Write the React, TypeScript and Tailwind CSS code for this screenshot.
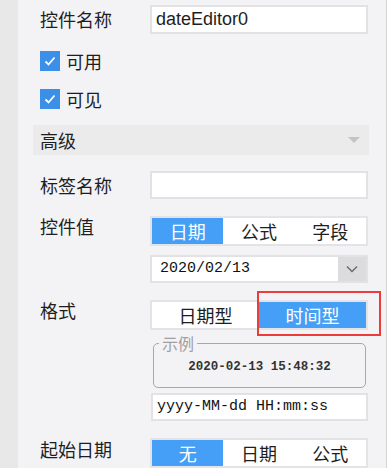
const cjk = { fontFamily: '"Noto Sans CJK SC", "Liberation Sans", sans-serif' }
const latin = { fontFamily: '"Liberation Sans", "Noto Sans CJK SC", sans-serif' }
const mono = { fontFamily: '"Liberation Mono", "DejaVu Sans Mono", monospace' }

function Check() {
  return (
    <span className="w-[20px] h-[20px] bg-[#3b8fe6] flex items-center justify-center">
      <svg width="14" height="14" viewBox="0 0 14 14">
        <path d="M2.5 7.5 L5.5 10.5 L11.5 3.5" fill="none" stroke="#fff" strokeWidth="1.8" />
      </svg>
    </span>
  )
}

function Segment({ items, active }: { items: string[]; active: number }) {
  return (
    <div className="w-[218px] h-[30px] border-2 border-[#e4e4e6] flex bg-white">
      {items.map((it, i) => (
        <div
          key={it}
          className={
            "flex-1 flex items-center justify-center text-[18px] " +
            (i === active ? "bg-[#459ff6] text-white" : "text-[#1e1e1e]")
          }
        >
          {it}
        </div>
      ))}
    </div>
  )
}

export default function App() {
  return (
    <div className="w-[387px] h-[468px] flex bg-[#f3f3f6] overflow-hidden border-r border-[#d4d4d6] text-[#1e1e1e]" style={cjk}>
      <div className="w-[18px] shrink-0 bg-[#e8e8e9]" />
      <div className="flex-1 pl-[22px] pt-[5px]">
        <div className="flex items-center h-[29px]">
          <div className="w-[110px] text-[18px]">控件名称</div>
          <div className="w-[218px] h-[29px] border-2 border-[#e2e2e4] bg-white flex items-center pl-[4px] text-[18px]" style={latin}>
            dateEditor0
          </div>
        </div>

        <div className="flex items-center gap-[6px] mt-[17px] h-[20px] text-[18px]">
          <Check />
          <span>可用</span>
        </div>
        <div className="flex items-center gap-[6px] mt-[18px] h-[20px] text-[18px]">
          <Check />
          <span>可见</span>
        </div>

        <div className="-ml-[7px] w-[336px] h-[30px] mt-[16px] bg-[#ebebec] flex items-center justify-between pl-[7px] pr-[9px]">
          <span className="text-[18px]">高级</span>
          <svg width="12" height="6" viewBox="0 0 12 6">
            <path d="M0 0 H12 L6 6 Z" fill="#c4c4c6" />
          </svg>
        </div>

        <div className="flex items-center h-[28px] mt-[16px]">
          <div className="w-[110px] text-[18px]">标签名称</div>
          <div className="w-[218px] h-[28px] border-2 border-[#e2e2e4] bg-white" />
        </div>

        <div className="flex items-start mt-[17px]">
          <div className="w-[110px] text-[18px] leading-[20px]">控件值</div>
          <Segment items={["日期", "公式", "字段"]} active={0} />
        </div>

        <div className="ml-[110px] mt-[9px] w-[218px] h-[28px] border-2 border-[#e2e2e4] bg-white flex">
          <div className="flex-1 flex items-center pl-[8px] text-[15px] text-[#111]" style={mono}>
            2020/02/13
          </div>
          <div className="w-[28px] bg-[#dcdcde] flex items-center justify-center">
            <svg width="12" height="8" viewBox="0 0 12 8">
              <path d="M1 1.5 L6 6.5 L11 1.5" fill="none" stroke="#666" strokeWidth="1.3" />
            </svg>
          </div>
        </div>

        <div className="flex items-start mt-[17px]">
          <div className="w-[110px] text-[18px] leading-[20px]">格式</div>
          <div className="relative">
            <Segment items={["日期型", "时间型"]} active={1} />
            <div className="absolute left-[107px] top-[-9px] w-[124px] h-[45px] border-2 border-[#ec3b3b]" />
          </div>
        </div>

        <div className="relative ml-[113px] mt-[13px] w-[213px] h-[45px] border border-[#a8a8aa] rounded-[5px] flex items-center justify-center pt-[4px]">
          <span className="absolute left-[5px] top-[-11px] px-[3px] bg-[#f3f3f6] text-[16px] leading-[20px] text-[#a0a0a2]">示例</span>
          <span className="text-[12.5px] font-bold text-[#333]" style={mono}>2020-02-13 15:48:32</span>
        </div>

        <div className="ml-[111px] mt-[5px] w-[217px] h-[28px] border-2 border-[#e2e2e4] bg-white flex items-center pl-[4px] text-[15px] text-[#111]" style={mono}>
          yyyy-MM-dd HH:mm:ss
        </div>

        <div className="flex items-start mt-[17px]">
          <div className="w-[110px] text-[18px] leading-[20px] pt-[1px]">起始日期</div>
          <Segment items={["无", "日期", "公式"]} active={0} />
        </div>
      </div>
    </div>
  )
}
